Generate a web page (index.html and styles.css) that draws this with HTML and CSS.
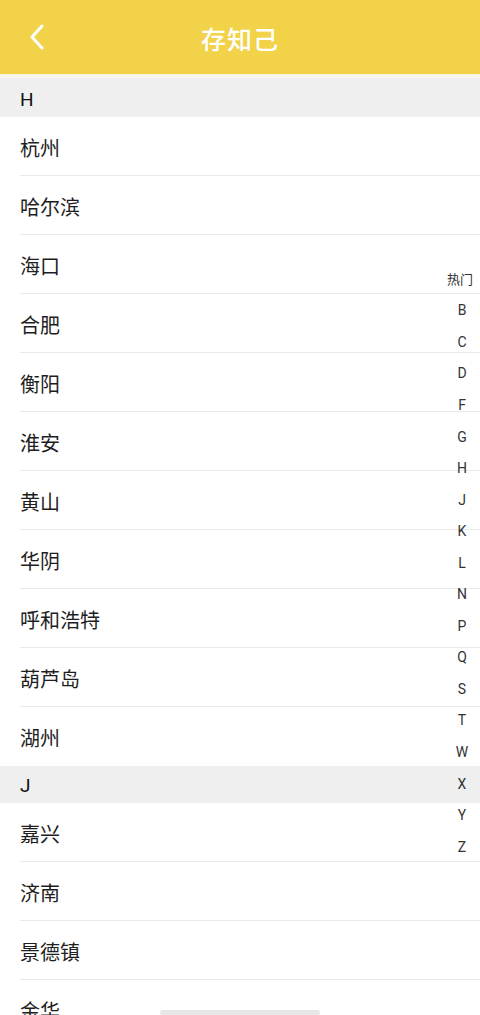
FILE: index.html
```html
<!DOCTYPE html>
<html lang="zh">
<head>
<meta charset="utf-8">
<title>存知己</title>
<link rel="stylesheet" href="styles.css">
</head>
<body>
<div class="page">
  <header class="topbar">
    <span class="back">
      <svg width="18" height="26" viewBox="0 0 18 26"><path d="M14 2 L4 13 L14 24" fill="none" stroke="#fff" stroke-width="3" stroke-linecap="round" stroke-linejoin="round"/></svg>
    </span>
    <h1 class="title">存知己</h1>
  </header>
  <div class="gap"></div>
  <div class="list">
    <div class="section">H</div>
    <div class="row">杭州</div>
    <div class="row">哈尔滨</div>
    <div class="row">海口</div>
    <div class="row">合肥</div>
    <div class="row">衡阳</div>
    <div class="row">淮安</div>
    <div class="row">黄山</div>
    <div class="row">华阴</div>
    <div class="row">呼和浩特</div>
    <div class="row">葫芦岛</div>
    <div class="row last">湖州</div>
    <div class="section j">J</div>
    <div class="row">嘉兴</div>
    <div class="row">济南</div>
    <div class="row">景德镇</div>
    <div class="row">金华</div>
  </div>
  <nav class="index">
    <span class="hot">热门</span>
    <span>B</span><span>C</span><span>D</span><span>F</span><span>G</span><span>H</span><span>J</span><span>K</span><span>L</span><span>N</span><span>P</span><span>Q</span><span>S</span><span>T</span><span>W</span><span>X</span><span>Y</span><span>Z</span>
  </nav>
  <div class="home"></div>
</div>
</body>
</html>
```
FILE: styles.css
```css
* { box-sizing: border-box; }
html, body { margin: 0; padding: 0; }
body {
  width: 480px;
  height: 1015px;
  overflow: hidden;
  background: #fff;
  font-family: "Noto Sans CJK SC", "Noto Sans", sans-serif;
  color: #222;
}
.page { position: relative; width: 480px; height: 1015px; overflow: hidden; }
.topbar {
  height: 74px;
  background: #f2d249;
  display: flex;
  align-items: center;
  justify-content: center;
  position: relative;
}
.back {
  position: absolute;
  left: 28px;
  top: 24px;
  width: 18px;
  height: 26px;
  display: flex;
}
.title {
  margin: 0;
  color: #fff;
  font-size: 25px;
  font-weight: 500;
  letter-spacing: 1px;
  line-height: 1;
  margin-top: 2px;
}
.gap { height: 4px; background: linear-gradient(#faf3d8, #f8f8f8); }
.section {
  height: 39px;
  background: #efefef;
  padding-left: 20px;
  padding-top: 4px;
  display: flex;
  align-items: center;
  font-family: "Roboto", "Noto Sans", sans-serif;
  font-size: 19px;
  color: #111;
}
.section.j { height: 37px; padding-top: 2px; }
.row {
  height: 59px;
  margin-left: 20px;
  border-bottom: 1px solid #eaeaea;
  display: flex;
  align-items: center;
  font-size: 20px;
  color: #1e1e1e;
  padding-top: 2px;
}
.row.last { border-bottom: none; }
.index {
  position: absolute;
  right: 0;
  top: 263px;
  width: 36px;
  display: flex;
  flex-direction: column;
  align-items: center;
  font-family: "Roboto", "Noto Sans", sans-serif;
  font-size: 14px;
  color: #333;
}
.index span {
  height: 31.55px;
  display: flex;
  align-items: center;
}
.index .hot { font-family: "Noto Sans CJK SC", sans-serif; font-size: 13px; margin-left: -4px; }
.home {
  position: absolute;
  left: 160px;
  top: 1010px;
  width: 160px;
  height: 5px;
  border-radius: 3px;
  background: #e6e6e6;
}
```
